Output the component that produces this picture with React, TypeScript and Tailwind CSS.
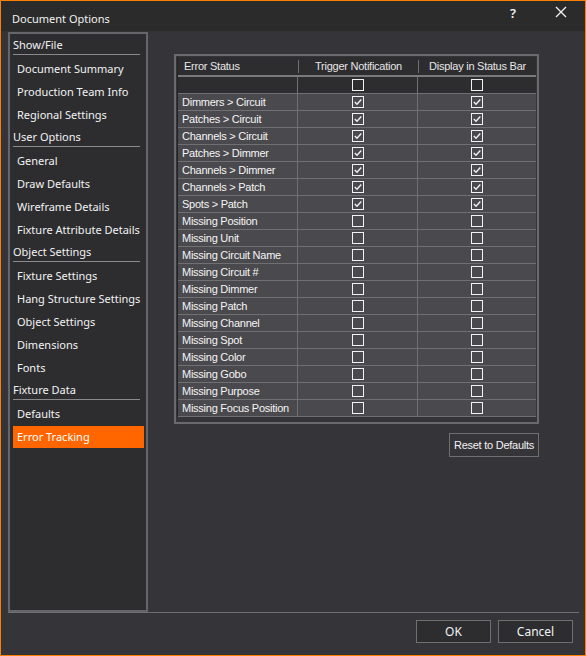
import React from 'react';

type Group = { title: string; items: string[] };

const groups: Group[] = [
  { title: 'Show/File', items: ['Document Summary', 'Production Team Info', 'Regional Settings'] },
  { title: 'User Options', items: ['General', 'Draw Defaults', 'Wireframe Details', 'Fixture Attribute Details'] },
  { title: 'Object Settings', items: ['Fixture Settings', 'Hang Structure Settings', 'Object Settings', 'Dimensions', 'Fonts'] },
  { title: 'Fixture Data', items: ['Defaults', 'Error Tracking'] },
];

const rows: { label: string; on: boolean }[] = [
  { label: 'Dimmers > Circuit', on: true },
  { label: 'Patches > Circuit', on: true },
  { label: 'Channels > Circuit', on: true },
  { label: 'Patches > Dimmer', on: true },
  { label: 'Channels > Dimmer', on: true },
  { label: 'Channels > Patch', on: true },
  { label: 'Spots > Patch', on: true },
  { label: 'Missing Position', on: false },
  { label: 'Missing Unit', on: false },
  { label: 'Missing Circuit Name', on: false },
  { label: 'Missing Circuit #', on: false },
  { label: 'Missing Dimmer', on: false },
  { label: 'Missing Patch', on: false },
  { label: 'Missing Channel', on: false },
  { label: 'Missing Spot', on: false },
  { label: 'Missing Color', on: false },
  { label: 'Missing Gobo', on: false },
  { label: 'Missing Purpose', on: false },
  { label: 'Missing Focus Position', on: false },
];

function Check({ on }: { on: boolean }) {
  return (
    <svg width="12" height="12" viewBox="0 0 12 12" className="block">
      <rect x="0.5" y="0.5" width="11" height="11" fill="none" stroke="#f2f2f2" strokeWidth="1" />
      {on && <path d="M2.8 6 L5 8.2 L9.3 3.6" fill="none" stroke="#f2f2f2" strokeWidth="1.4" />}
    </svg>
  );
}

function Sidebar() {
  return (
    <div className="w-[140px] h-[580px] border-2 border-[#666569] bg-[#2d2d30] pl-[3px] pr-[2px] text-[11px] text-[#f2f2f2] font-['Noto_Sans',sans-serif] whitespace-nowrap">
      {groups.map((g) => (
        <div key={g.title}>
          <div className="h-[23px] pr-[4px]">
            <div className="h-[21px] border-b border-[#8a8a8c] flex items-center pt-[3px]">{g.title}</div>
          </div>
          {g.items.map((it) => {
            const sel = it === 'Error Tracking';
            return (
              <div
                key={it}
                className={
                  sel
                    ? 'h-[22px] mt-[1px] bg-[#ff6600] flex items-center pl-[4px] pt-px text-white'
                    : 'h-[23px] flex items-center pl-[4px] pt-[2px]'
                }
              >
                {it}
              </div>
            );
          })}
        </div>
      ))}
    </div>
  );
}

function Table() {
  return (
    <div className="w-[365px] h-[370px] border-2 border-[#6a696d] pl-px pt-px pr-px">
      <div className="border-l border-[#232325] text-[11px] tracking-[-0.25px] font-['Liberation_Sans',sans-serif] whitespace-nowrap">
        <div className="h-[20px] bg-[#2d2d30] flex items-center text-[#e6e6e6] border-b-2 border-[#7a7a7c]">
          <div className="w-[120px] pl-[6px]">Error Status</div>
          <div className="w-px h-[13px] bg-[#707072]" />
          <div className="w-[119px] text-center">Trigger Notification</div>
          <div className="w-px h-[13px] bg-[#707072]" />
          <div className="flex-1 text-center">Display in Status Bar</div>
        </div>
        <div className="h-[17px] bg-[#2d2d30] flex border-b border-[#707072]">
          <div className="w-[120px] border-r border-[#707072]" />
          <div className="w-[120px] border-r border-[#707072] flex items-center justify-center">
            <Check on={false} />
          </div>
          <div className="flex-1 flex items-center justify-center">
            <Check on={false} />
          </div>
        </div>
        {rows.map((r) => (
          <div key={r.label} className="h-[17px] bg-[#4a494d] flex border-b border-[#707072] text-[#f5f5f5]">
            <div className="w-[120px] border-r border-[#707072] pl-[4px] flex items-center">
              {r.label}
            </div>
            <div className="w-[120px] border-r border-[#707072] flex items-center justify-center">
              <Check on={r.on} />
            </div>
            <div className="flex-1 flex items-center justify-center">
              <Check on={r.on} />
            </div>
          </div>
        ))}
      </div>
    </div>
  );
}

export default function App() {
  return (
    <div className="w-[586px] h-[656px] border border-[#ff8000] bg-[#353438] flex flex-col overflow-hidden">
      <div className="h-[30px] bg-[#2b2b2b] flex items-start text-[#f2f2f2] font-['Noto_Sans',sans-serif] shrink-0">
        <div className="pl-[11px] pt-[10px] text-[11px] flex-1">Document Options</div>
        <div className="w-[24px] pt-[3px] text-[13px] font-semibold text-center">?</div>
        <div className="w-[24px] ml-[24px] mr-[12px] pt-[5px] flex justify-center">
          <svg width="12" height="12" viewBox="0 0 12 12">
            <path d="M1 1 L11 11 M11 1 L1 11" stroke="#f2f2f2" strokeWidth="1.3" />
          </svg>
        </div>
      </div>
      <div className="flex pl-[7px] pt-px h-[581px] shrink-0">
        <Sidebar />
        <div className="flex flex-col pl-[26px] pt-[22px]">
          <Table />
          <div className="flex justify-end pt-[9px]">
            <button className="w-[90px] h-[24px] border border-[#6f6f71] text-[11px] tracking-[-0.25px] whitespace-nowrap text-[#f2f2f2] font-['Liberation_Sans',sans-serif]">
              Reset to Defaults
            </button>
          </div>
        </div>
      </div>
      <div className="ml-[7px] w-[571px] h-px bg-[#6f6f71]" />
      <div className="flex justify-end gap-[7px] pr-[12px] pt-[7px] font-['Noto_Sans',sans-serif] text-[12px] text-[#f2f2f2]">
        <button className="w-[75px] h-[23px] bg-[#2d2d30] border border-[#6f6f71]">OK</button>
        <button className="w-[75px] h-[23px] bg-[#2d2d30] border border-[#6f6f71]">Cancel</button>
      </div>
    </div>
  );
}
